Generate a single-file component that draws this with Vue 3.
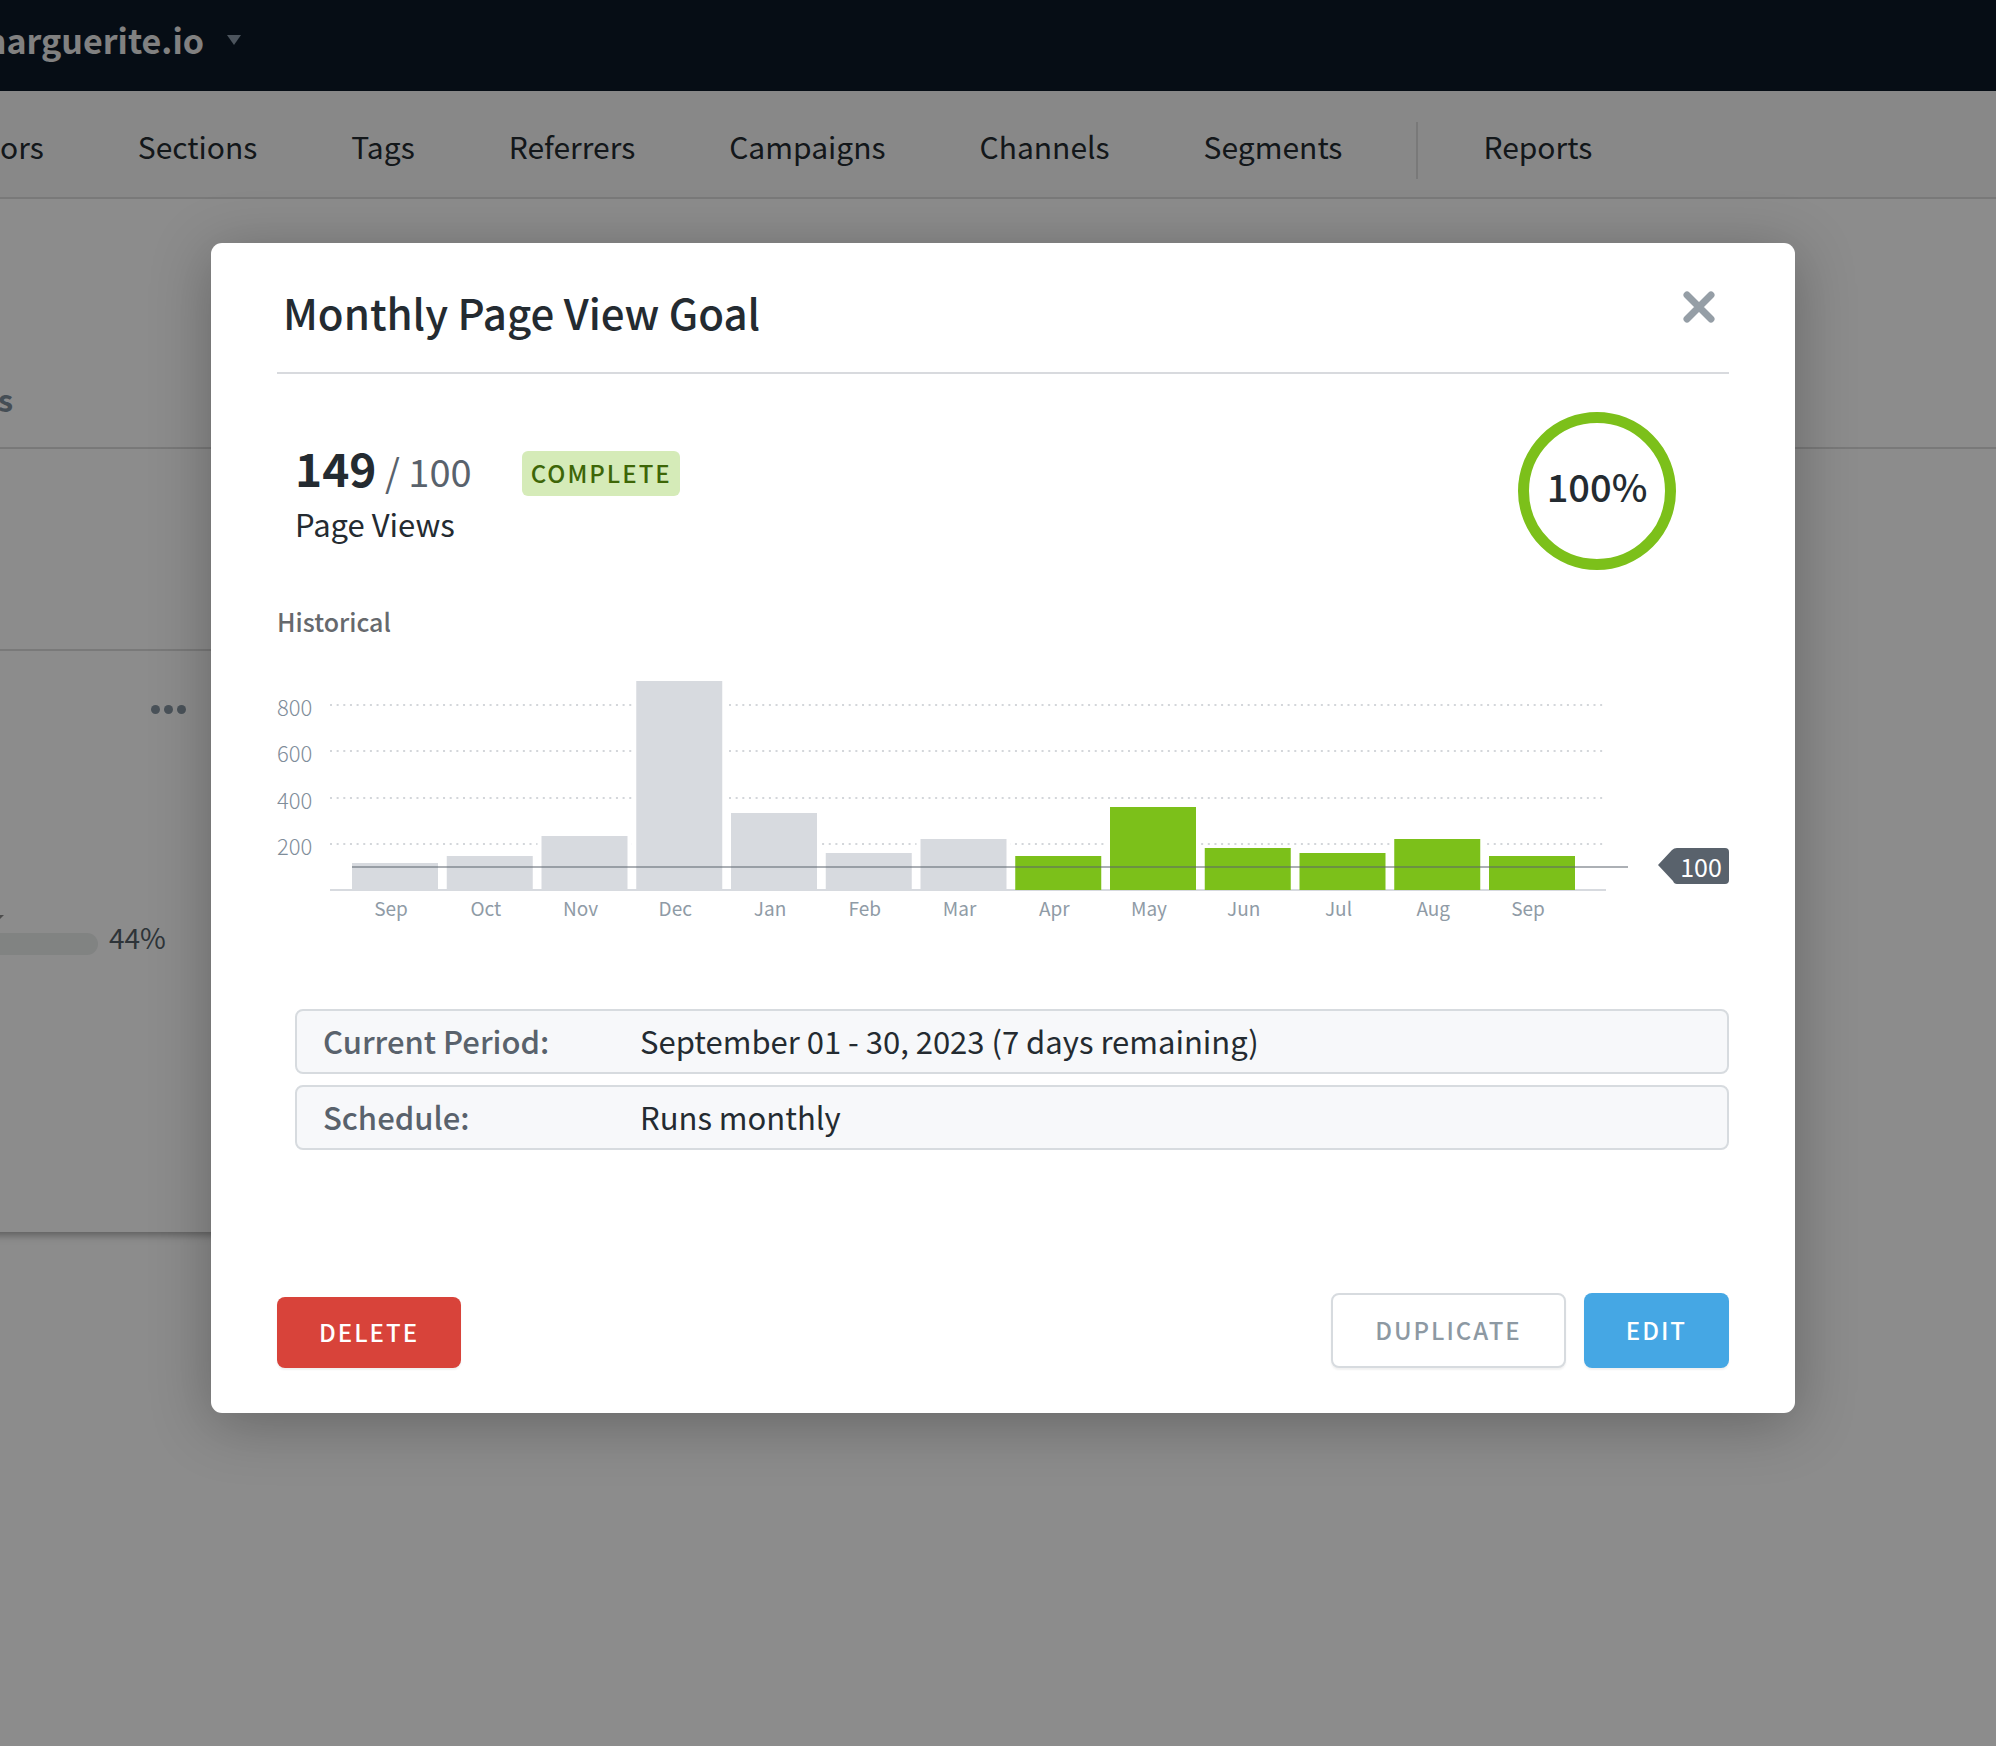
<template>
  <div class="page">
    <header class="topbar">
      <span class="site">marguerite.io</span>
      <svg class="caret" width="14" height="10" viewBox="0 0 14 10">
        <path d="M0 0h14L7 10z" fill="#8a9aa9" />
      </svg>
    </header>

    <nav class="nav">
      <a href="#" v-for="item in navItems" :key="item">{{ item }}</a>
      <span class="separator"></span>
      <a href="#">Reports</a>
    </nav>

    <div class="tabs"><a href="#">s</a></div>

    <section class="card">
      <div class="cardHead"></div>
      <div class="cardMenu">
        <button class="dots" aria-label="More"><i></i><i></i><i></i></button>
      </div>
      <div class="progressRow">
        <div class="track"></div>
        <span>44%</span>
      </div>
    </section>

    <div class="overlay">
      <div class="modal" role="dialog" aria-labelledby="goal-title">
        <div class="modalHead">
          <h1 id="goal-title">Monthly Page View Goal</h1>
          <button class="close" aria-label="Close">
            <svg width="32" height="32" viewBox="0 0 32 32">
              <path d="M4 4l24 24M28 4L4 28" stroke="#959ea6" stroke-width="7" stroke-linecap="round" />
            </svg>
          </button>
        </div>

        <div class="summary">
          <div class="stats">
            <div class="figures">
              <div><strong>149</strong> <span class="target">/ 100</span></div>
              <span class="badge">Complete</span>
            </div>
            <div class="metric">Page Views</div>
          </div>
          <div class="ring">100%</div>
        </div>

        <h2>Historical</h2>
        <svg class="chart" viewBox="0 0 1452 260">
          <g v-for="tick in ticks" :key="tick">
            <line class="gridline" x1="53" x2="1329" :y1="y(tick)" :y2="y(tick)" />
            <text class="tick" x="0" :y="y(tick) + 11">{{ tick }}</text>
          </g>
          <line class="axis" x1="53" x2="1329" :y1="base" :y2="base" />
          <g v-for="(bar, i) in bars" :key="i">
            <rect class="gap" :x="x(i) - 4" :y="y(bar.value)" width="94" :height="base - 1 - y(bar.value)" />
            <rect :class="bar.met ? 'met' : 'past'" :x="x(i)" :y="y(bar.value)" width="86" :height="base - y(bar.value)" />
            <text class="month" :x="x(i) + 39" y="246">{{ bar.month }}</text>
          </g>
          <line class="goal" x1="75" x2="1351" :y1="y(100)" :y2="y(100)" />
          <path class="flag" d="M1381 195L1395 180Q1397 178 1400 178H1448Q1452 178 1452 182V210Q1452 214 1448 214H1400Q1397 214 1396 211Z" />
          <text class="flagText" x="1424" y="207">100</text>
        </svg>

        <dl class="details">
          <div v-for="row in details" :key="row.label">
            <dt>{{ row.label }}</dt>
            <dd>{{ row.value }}</dd>
          </div>
        </dl>

        <div class="actions">
          <button class="btn delete">Delete</button>
          <button class="btn duplicate">Duplicate</button>
          <button class="btn edit">Edit</button>
        </div>
      </div>
    </div>
  </div>
</template>

<script setup>
const navItems = ["ors", "Sections", "Tags", "Referrers", "Campaigns", "Channels", "Segments"];

const ticks = [800, 600, 400, 200];

const bars = [
  { month: "Sep", value: 115 },
  { month: "Oct", value: 149 },
  { month: "Nov", value: 233 },
  { month: "Dec", value: 904 },
  { month: "Jan", value: 331 },
  { month: "Feb", value: 160 },
  { month: "Mar", value: 220 },
  { month: "Apr", value: 149, met: true },
  { month: "May", value: 357, met: true },
  { month: "Jun", value: 182, met: true },
  { month: "Jul", value: 160, met: true },
  { month: "Aug", value: 221, met: true },
  { month: "Sep", value: 149, met: true },
];

const details = [
  { label: "Current Period:", value: "September 01 - 30, 2023 (7 days remaining)" },
  { label: "Schedule:", value: "Runs monthly" },
];

// chart scales
const base = 220;
const y = (value) => Math.round(base - (value * 185) / 800);
const x = (i) => 75 + i * 94.75;
</script>

<style>
body {
  margin: 0;
}
</style>

<style scoped>
.page {
  position: relative;
  min-height: 100vh;
  overflow: hidden;
  background: #fff;
  color: #242b31;
  font-family: "Noto Sans CJK SC", "Noto Sans", sans-serif;
  font-size: 31px;
}

a {
  color: inherit;
  text-decoration: none;
}

button {
  padding: 0;
  border: 0;
  background: none;
  font-family: inherit;
  cursor: pointer;
}

.topbar {
  display: flex;
  align-items: center;
  gap: 23px;
  height: 91px;
  background: #0b1827;
}

.site {
  display: flex;
  justify-content: flex-end;
  width: 204px;
  line-height: 76px;
  overflow: hidden;
  color: #ececec;
  font-size: 34px;
  font-weight: 700;
}

.topbar .site,
.topbar .caret {
  margin-bottom: 12px;
}

.nav {
  display: flex;
  gap: 94px;
  height: 106px;
  line-height: 111px;
  background: #f8f8f8;
  border-bottom: 2px solid #dcdcdc;
  font-size: 30px;
  white-space: nowrap;
}

.separator {
  width: 2px;
  height: 57px;
  margin: 31px -29px 0 -20px;
  background: #dcdcdc;
}

.tabs {
  height: 248px;
  border-bottom: 2px solid #dcdcdc;
}

.tabs a {
  display: flex;
  justify-content: flex-end;
  width: 13px;
  padding-top: 170px;
  line-height: 60px;
  color: #7f8e9c;
  font-size: 31px;
  font-weight: 700;
}

.card {
  width: 55%;
  height: 783px;
  margin-left: -20px;
  padding-left: 20px;
  box-shadow: 0 6px 8px -3px rgba(0, 0, 0, 0.35);
}

.cardHead {
  height: 200px;
  margin-left: -20px;
  border-bottom: 2px solid #dcdcdc;
}

.cardMenu {
  padding: 54px 0 0 151px;
}

.dots {
  display: flex;
  gap: 4px;
}

.dots i {
  width: 9px;
  height: 9px;
  border-radius: 50%;
  background: #8796a3;
}

.progressRow {
  display: flex;
  align-items: flex-end;
  gap: 11px;
  padding-top: 205px;
  color: #555f68;
  font-size: 28px;
}

.progressRow span {
  line-height: 36px;
}

.track {
  position: relative;
  width: 98px;
  height: 22px;
  border-radius: 0 11px 11px 0;
  background: #ebeeed;
}

/* tip of the progress marker */
.track::before {
  content: "";
  position: absolute;
  top: -18px;
  left: 0;
  width: 4px;
  height: 4px;
  background: #8c8c8c;
  clip-path: polygon(0 0, 100% 0, 0 100%);
}

.overlay {
  position: absolute;
  inset: 0;
  padding: 243px 201px 0 211px;
  background: rgba(0, 0, 0, 0.45);
}

.modal {
  padding: 0 66px 45px;
  border-radius: 11px;
  background: #fff;
  box-shadow: 0 10px 60px rgba(0, 0, 0, 0.28);
}

.modalHead {
  display: flex;
  justify-content: space-between;
  padding: 39px 14px 30px 6px;
  border-bottom: 2px solid #d8dade;
}

.modalHead h1 {
  margin: 0;
  line-height: 60px;
  font-size: 42px;
  font-weight: 500;
}

.close {
  height: 32px;
  margin-top: 9px;
}

.close svg {
  display: block;
}

.summary {
  display: flex;
  align-items: center;
  justify-content: space-between;
  padding: 38px 53px 0 18px;
}

.figures {
  display: flex;
  align-items: flex-end;
  gap: 50px;
  line-height: 60px;
  font-size: 38px;
}

.figures strong {
  font-size: 46px;
  font-weight: 700;
}

.target {
  color: #59626c;
}

.badge {
  margin-bottom: 5px;
  padding: 0 8px 2px 9px;
  border-radius: 6px;
  background: #d5ebb8;
  color: #3d6607;
  line-height: 43px;
  font-size: 24px;
  font-weight: 500;
  letter-spacing: 2px;
  text-transform: uppercase;
}

.metric {
  line-height: 45px;
}

.ring {
  box-sizing: border-box;
  width: 158px;
  height: 158px;
  border: 11px solid #7cc01a;
  border-radius: 50%;
  line-height: 126px;
  text-align: center;
  font-size: 38px;
  font-weight: 500;
}

h2 {
  margin: 33px 0 31px;
  color: #66696d;
  line-height: 36px;
  font-size: 25px;
  font-weight: 500;
}

.chart {
  display: block;
  width: 100%;
}

.gridline {
  stroke: #d3d6da;
  stroke-width: 2;
  stroke-dasharray: 2 4.65;
}

.axis {
  stroke: #d7dadf;
  stroke-width: 2;
}

.gap {
  fill: #fff;
}

.past {
  fill: #d7dadf;
}

.met {
  fill: #7cc01a;
}

.goal {
  stroke: #59626c;
  stroke-opacity: 0.5;
  stroke-width: 2;
}

.tick {
  fill: #7f8d9a;
  font-size: 22px;
  font-weight: 300;
}

.month {
  fill: #8f9ba6;
  font-size: 19px;
  text-anchor: middle;
}

.flag {
  fill: #59626c;
}

.flagText {
  fill: #fff;
  font-size: 25px;
  text-anchor: middle;
}

.details {
  display: grid;
  gap: 11px;
  margin: 79px 0 143px 18px;
}

.details div {
  display: flex;
  padding: 0 26px 2px;
  border: 2px solid #d7dbdf;
  border-radius: 8px;
  background: #f7f8fa;
  line-height: 59px;
}

.details dt {
  width: 317px;
  color: #59626c;
  font-weight: 500;
}

.details dd {
  margin: 0;
}

.actions {
  display: flex;
  align-items: flex-end;
  gap: 18px;
}

.btn {
  height: 75px;
  padding: 0 42px 2px;
  border-radius: 8px;
  box-shadow: 0 2px 2px rgba(0, 0, 0, 0.06);
  color: #fff;
  font-size: 24px;
  font-weight: 500;
  letter-spacing: 2px;
  text-transform: uppercase;
}

.delete {
  height: 71px;
  margin-right: auto;
  background: #d8433a;
}

.duplicate {
  border: 2px solid #d7dbdf;
  background: #fff;
  color: #8d99a3;
}

.edit {
  background: #45a7e4;
}
</style>
